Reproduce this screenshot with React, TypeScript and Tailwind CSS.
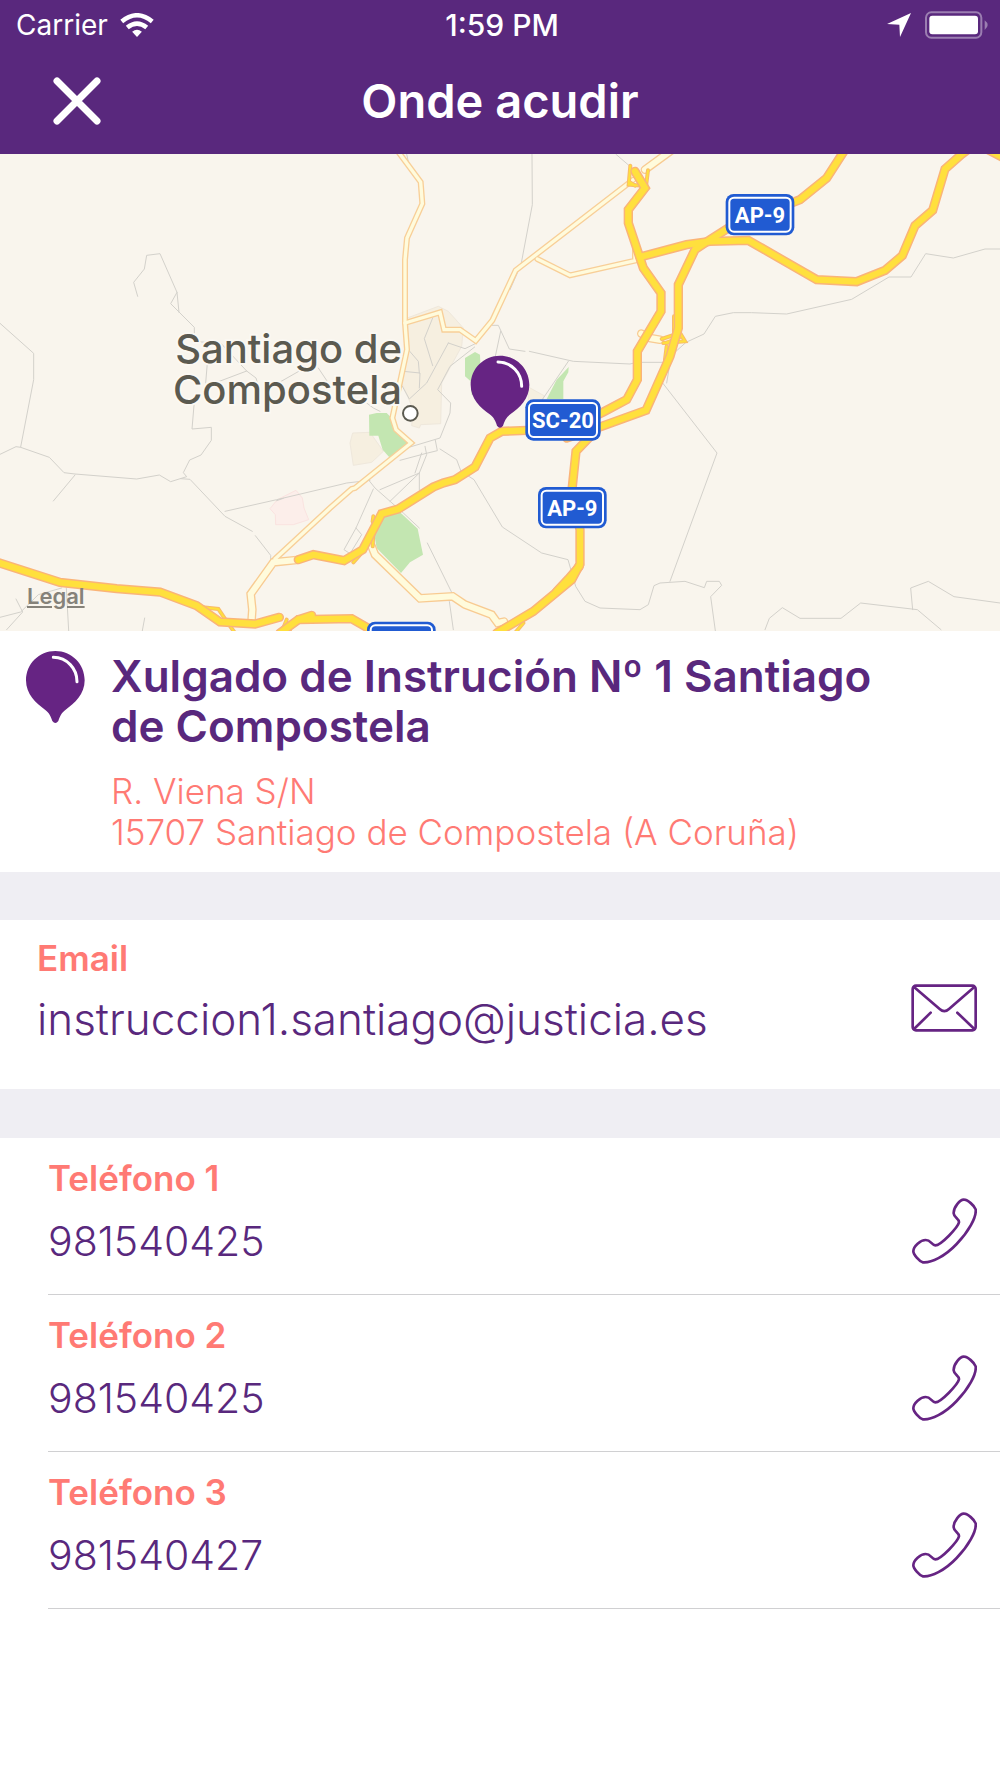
import React from 'react';

interface Phone {
    label: string;
    number: string;
}

interface ShieldProps {
    x: number;
    y: number;
    width: number;
    text: string;
}

const phones: Phone[] = [
    { label: 'Teléfono 1', number: '981540425' },
    { label: 'Teléfono 2', number: '981540425' },
    { label: 'Teléfono 3', number: '981540427' },
];

const email = 'instruccion1.santiago@justicia.es';

// Map geometry, in map units (3 units per pixel)
const motorways: string[] = [
    '-10,1237 180,1298 350,1317 480,1327 590,1368 660,1417 765,1423 838,1403',
    '840,1450 895,1410 1055,1407 1130,1450',
    '895,1410 935,1397',
    '895,1230 940,1215 1032,1233 1088,1200 1145,1092 1195,1078 1300,1012 1330,1000 1365,990 1425,952 1470,865 1505,845 1580,842 1700,835',
    '1700,840 1810,787 1880,750 1912,690 1912,605 1983,485 1983,430 1930,355 1885,220 1885,180 1935,115 1905,65',
    '1700,865 1805,830 1938,782 2010,620 2035,535 2035,405 2085,300 2130,270 2190,232 2400,150 2480,85 2535,0',
    '1920,322 2060,285 2130,275 2245,272 2450,390 2570,396 2655,362 2707,318 2745,228 2798,182 2835,58 2885,14 2910,-5',
    '2960,-2 3010,24',
    '1790,840 1728,905 1715,1030 1740,1140 1740,1243 1715,1290 1600,1385 1490,1450',
    '1738,1250 1705,1288 1670,1325',
];

const ramps: string[] = [
    '600,1372 655,1378 680,1415 705,1450',
    '860,1410 850,1435 870,1445',
    '1891,48 1886,105 1930,108',
    '1890,98 1905,108',
    '1944,62 1938,110',
    '1985,568 2040,550 2055,575 1990,580',
    '1998,580 2040,562',
    '2000,590 1995,630',
    '2022,500 2022,560',
    '1120,1100 1118,1115 1125,1130',
    '1120,1150 1118,1190',
    '1060,1238 1085,1210',
    '1570,1420 1545,1450',
];

const mainStreets: string[] = [
    '1190,0 1262,97 1267,162 1221,265 1215,330 1215,520 1221,600 1177,805 1188,840 1233,880 1065,1015 1055,1018 990,1075 825,1228',
    '1215,520 1320,488 1332,540 1380,540 1427,573 1477,512 1547,362 1900,90',
    '1612,328 1710,377 1905,333 1905,290',
];

const wideStreets: string[] = [
    '890,1231 820,1238 752,1333 757,1380 755,1408',
    '1115,1190 1125,1215 1260,1346 1358,1340 1395,1365 1475,1395 1493,1420 1512,1416',
    '1935,60 2020,-2',
    '1924,552 1950,565 1980,570',
];

const minorRoads: string[] = [
    '413,440 401,398 433,358 440,317 480,312 531,428 512,462 583,533 583,570 605,577 662,580 740,664 768,685 780,725',
    '531,428 537,488',
    '740,664 650,698',
    '622,640 617,700',
    '840,697 905,660',
    '955,655 985,700',
    '0,521 101,611 101,690 62,892',
    '0,914 48,891 62,893 148,923 192,969 225,973 410,988 478,976 512,996 560,981 550,969 569,931 603,916 634,872 634,833 576,838 583,755',
    '225,976 160,1054',
    '542,987 570,989 675,1100 757,1145',
    '766,1158 812,1217 812,1240',
    '675,1085 830,1050 1020,1005 1040,1000 1110,992',
    '830,1053 850,1046',
    '0,1403 62,1387 115,1335 185,1315',
    '48,1348 68,1387 20,1440',
    '199,1315 206,1443',
    '434,1405 427,1443',
    '1596,14 1597,165 1563,345 1530,420',
    '1217,0 1227,45',
    '1477,527 1495,527 1528,598 1575,605',
    '1588,605 1720,635 1890,643 1910,638 2000,638',
    '1502,545 1486,620',
    '1705,635 1620,760',
    '1848,14 1890,50',
    '1298,505 1273,567 1298,648',
    '1345,580 1395,597 1430,580',
    '1345,580 1280,700 1228,748 1207,710',
    '1424,592 1350,650 1313,720 1352,760 1350,790 1320,865 1230,892',
    '1210,665 1260,670 1258,715',
    '1225,600 1255,635 1258,670',
    '1200,932 1275,912 1312,903 1306,872',
    '1275,890 1280,915 1258,970 1170,1055',
    '1265,910 1245,970',
    '1258,970 1258,1020',
    '1258,970 1140,1020',
    '1320,898 1370,930 1383,965 1422,990 1507,1132 1625,1210 1704,1230 1727,1310 1755,1355 1800,1375 1920,1380 1945,1365 1962,1308 1980,1300 2055,1295 2113,1314 2120,1295 2158,1295 2165,1307 2132,1341 2146,1443',
    '1120,1018 1068,1135 1032,1200 1050,1212 1085,1155 1068,1135',
    '1105,990 1125,1015 1210,1090 1258,1135',
    '1282,1180 1355,1328 1348,1355 1360,1440',
    '1483,740 1483,810',
    '2000,700 2010,640',
    '1988,700 2151,910 2010,1295',
    '2020,612 2058,578 2112,553 2146,500 2200,489 2255,489 2360,493 2555,449 2667,382 2733,382 2777,312 2860,325 2955,298 3000,298',
    '2295,1440 2308,1406 2347,1374 2400,1406 2523,1406 2582,1360 2752,1380 2823,1440',
    '2738,1380 2732,1315 2785,1295 2862,1341 3000,1360',
    '1100,760 1120,775 1140,785',
];

const Roads: React.FC<{ lines: string[]; width: number; color: string }> = ({ lines, width, color }) => (
    <g fill="none" stroke={color} strokeWidth={width} strokeLinejoin="miter" strokeLinecap="round">
        {lines.map((points) => (
            <polyline key={points} points={points} />
        ))}
    </g>
);

// Blue road sign with a white inner line
const Shield: React.FC<ShieldProps> = ({ x, y, width, text }) => (
    <g>
        <rect x={x} y={y} width={width} height={124} rx={24} fill="#215bd2" />
        <rect x={x + 11} y={y + 11} width={width - 22} height={102} rx={14} fill="none" stroke="#fff" strokeWidth={6} />
        <text
            x={x + width / 2}
            y={y + 86}
            textAnchor="middle"
            fill="#fff"
            fontSize={66}
            fontWeight={700}
            fontFamily="Roboto, sans-serif"
        >
            {text}
        </text>
    </g>
);

const PinShape: React.FC = () => (
    <>
        <path
            d="M88 0C137 0 176 39 176 88C176 130 146 157 119 176C106 185 101 198 97 210Q88 222 79 210C75 198 70 185 57 176C30 157 0 130 0 88C0 39 39 0 88 0Z"
            fill="#662483"
        />
        <path d="M82 19C123 20 153 52 153 92" fill="none" stroke="#fff" strokeWidth={9} strokeLinecap="round" />
    </>
);

const EnvelopeIcon: React.FC = () => (
    <svg viewBox="0 0 198 144" className="w-[66px] h-12" fill="none" stroke="#662483" strokeWidth={8} strokeLinecap="round" strokeLinejoin="round">
        <rect x="5" y="5" width="189" height="134" rx="10" />
        <path d="M9 9L86 75Q100 88 114 75L190 9M9 135L59 86M190 135L139 86" />
    </svg>
);

const PhoneIcon: React.FC = () => (
    <svg viewBox="153 742 198 198" className="w-[66px] h-[66px]" fill="none" stroke="#662483" strokeWidth={8} strokeLinejoin="round">
        <path d="M313 747C300 745 280 771 281 788C282 801 298 803 297 815C294 830 243 884 226 884C214 883 213 868 197 868C182 868 160 886 160 902C160 912 178 932 188 935C213 938 255 917 290 880C325 844 350 800 347 776C343 765 323 747 313 747Z" />
    </svg>
);

const StatusBar: React.FC = () => (
    <div className="grid grid-cols-3 items-center h-[50px] pl-4 pr-3 text-[28px] leading-8 text-white">
        <div className="flex items-center gap-3">
            <span>Carrier</span>
            <svg viewBox="0 0 102 74" className="w-[34px] h-6" fill="none" stroke="#fff" strokeWidth={14}>
                <path d="M4 26Q51 -12 98 26" />
                <path d="M21 45Q51 20 81 45" />
                <path d="M36 58Q51 46 66 58L51 74Z" fill="#fff" stroke="none" />
            </svg>
        </div>
        <span className="text-center text-[30px] font-medium">1:59 PM</span>
        <div className="flex items-center justify-end gap-3.5">
            <svg viewBox="0 0 72 72" className="w-6 h-6" fill="#fff">
                <path d="M72 0L39 72L37 35L0 33Z" />
            </svg>
            <svg viewBox="0 0 189 84" className="w-[63px] h-7">
                <rect x="3" y="4" width="166" height="76" rx="16" fill="none" stroke="#9b7eb1" strokeWidth={6} />
                <rect x="13" y="14" width="146" height="56" rx="9" fill="#fff" />
                <path d="M179 28Q197 42 179 57Z" fill="#9b7eb1" />
            </svg>
        </div>
    </div>
);

const MapView: React.FC = () => (
    <div className="relative h-[477px] bg-[#f9f5ed] overflow-hidden">
        <svg viewBox="0 13 3000 1431" preserveAspectRatio="xMidYMid slice" className="block w-full h-full">
            <g fill="#f6efe0" stroke="#efe8dc" strokeWidth={3}>
                <path d="M1222 505L1315 470L1345 485L1390 535L1385 590L1325 700L1322 822L1262 825L1258 835L1235 828L1240 780L1205 700L1225 600Z" />
                <path d="M1058 850L1110 848L1150 905L1115 938L1060 947L1050 880Z" />
                <path d="M1585 712L1632 738L1625 760L1585 755Z" />
            </g>
            <path d="M810 1077L832 1050L888 1022L907 1045L912 1075L926 1110L880 1125L827 1125L826 1095Z" fill="#fceeea" stroke="#fae3e0" strokeWidth={3} />
            <g fill="#c3e6b1">
                <path d="M1107 795L1130 790L1160 790L1180 810L1190 845L1230 885L1190 908L1168 923L1148 900L1135 858L1108 858Z" />
                <path d="M1395 625L1425 607L1440 615L1445 740L1415 735L1412 695L1395 680Z" />
                <path d="M1706 652L1705 668L1690 695L1690 748L1640 748L1670 690Z" />
                <path d="M1145 1095L1200 1088L1253 1137L1269 1215L1230 1238L1203 1270L1130 1195L1122 1150Z" />
            </g>
            <Roads lines={minorRoads} width={3} color="#d3d1cb" />
            <Roads lines={mainStreets} width={18} color="#f8cf98" />
            <Roads lines={wideStreets} width={26} color="#f8cb92" />
            <Roads lines={mainStreets} width={10} color="#fffbdc" />
            <Roads lines={wideStreets} width={18} color="#fffbdc" />
            <Roads lines={ramps} width={12} color="#f9bb6a" />
            <Roads lines={ramps} width={6} color="#ffe03d" />
            <Roads lines={motorways} width={28} color="#fab478" />
            <Roads lines={motorways} width={19} color="#ffe03d" />

            <circle cx={1231} cy={791} r={22} fill="#fff" stroke="#5b5a50" strokeWidth={6} />

            <Shield x={2177} y={133} width={206} text="AP-9" />
            <Shield x={1576} y={749} width={226} text="SC-20" />
            <Shield x={1614} y={1012} width={206} text="AP-9" />
            <Shield x={1101} y={1416} width={206} text="" />

            <g transform="translate(1412 618)">
                <PinShape />
            </g>
        </svg>
        <div className="absolute top-[174px] right-[598px] text-right text-[40px] leading-[41px] font-medium text-[#5b5a50] [-webkit-text-stroke:4px_#fbf8f2] [paint-order:stroke_fill]">
            Santiago de
            <br />
            Compostela
        </div>
        <a href="#legal" className="absolute left-[27px] bottom-[21px] text-[22px] leading-7 font-semibold text-[#85827a] underline">
            Legal
        </a>
    </div>
);

const App: React.FC = () => {
    return (
        <div className="min-h-screen w-full bg-white font-['Inter',sans-serif] text-[#59287d]">
            <header className="bg-[#59287d] h-[154px]">
                <StatusBar />
                <div className="grid grid-cols-[auto_1fr_auto] items-center h-[102px] px-[53px]">
                    <button type="button" aria-label="Pechar" className="w-12 h-12">
                        <svg viewBox="0 0 48 48" className="w-12 h-12" fill="none" stroke="#fff" strokeWidth={7} strokeLinecap="round">
                            <path d="M4 4L44 44M44 4L4 44" />
                        </svg>
                    </button>
                    <h1 className="text-center text-[47px] leading-[52px] font-semibold text-white">Onde acudir</h1>
                    <div className="w-12" />
                </div>
            </header>

            <main>
                <MapView />

                <section className="flex gap-[26px] pt-5 pb-[19px] pl-[26px] pr-[100px]">
                    <svg viewBox="0 0 177 216" className="w-[59px] h-[72px] shrink-0">
                        <PinShape />
                    </svg>
                    <div>
                        <h2 className="text-[44px] leading-[50px] font-semibold">
                            Xulgado de Instrución Nº 1 Santiago de Compostela
                        </h2>
                        <address className="mt-5 not-italic text-[35px] leading-[41px] font-light text-[#ff7a74]">
                            R. Viena S/N
                            <br />
                            15707 Santiago de Compostela (A Coruña)
                        </address>
                    </div>
                </section>

                <div className="h-12 bg-[#efeef3]" />

                <section className="flex items-start justify-between h-[169px] pt-[18px] pl-[37px] pr-[23px]">
                    <div>
                        <h3 className="text-[35px] leading-10 font-semibold text-[#ff7a74]">Email</h3>
                        <p className="mt-4 text-[44px] leading-[50px] font-light">{email}</p>
                    </div>
                    <a href={`mailto:${email}`} aria-label="Enviar email" className="pt-[46px]">
                        <EnvelopeIcon />
                    </a>
                </section>

                <div className="h-[49px] bg-[#efeef3]" />

                <ul className="pl-12">
                    {phones.map((phone) => (
                        <li key={phone.label} className="flex justify-between h-[157px] pr-[23px] border-b border-[#d0d0d2]">
                            <div className="pt-5">
                                <h3 className="text-[35px] leading-10 font-semibold text-[#ff7a74]">{phone.label}</h3>
                                <p className="mt-[18px] text-[41px] leading-[50px] font-light">{phone.number}</p>
                            </div>
                            <a href={`tel:${phone.number}`} aria-label={`Chamar a ${phone.label}`} className="pt-[60px]">
                                <PhoneIcon />
                            </a>
                        </li>
                    ))}
                </ul>
            </main>
        </div>
    );
};

export default App;
